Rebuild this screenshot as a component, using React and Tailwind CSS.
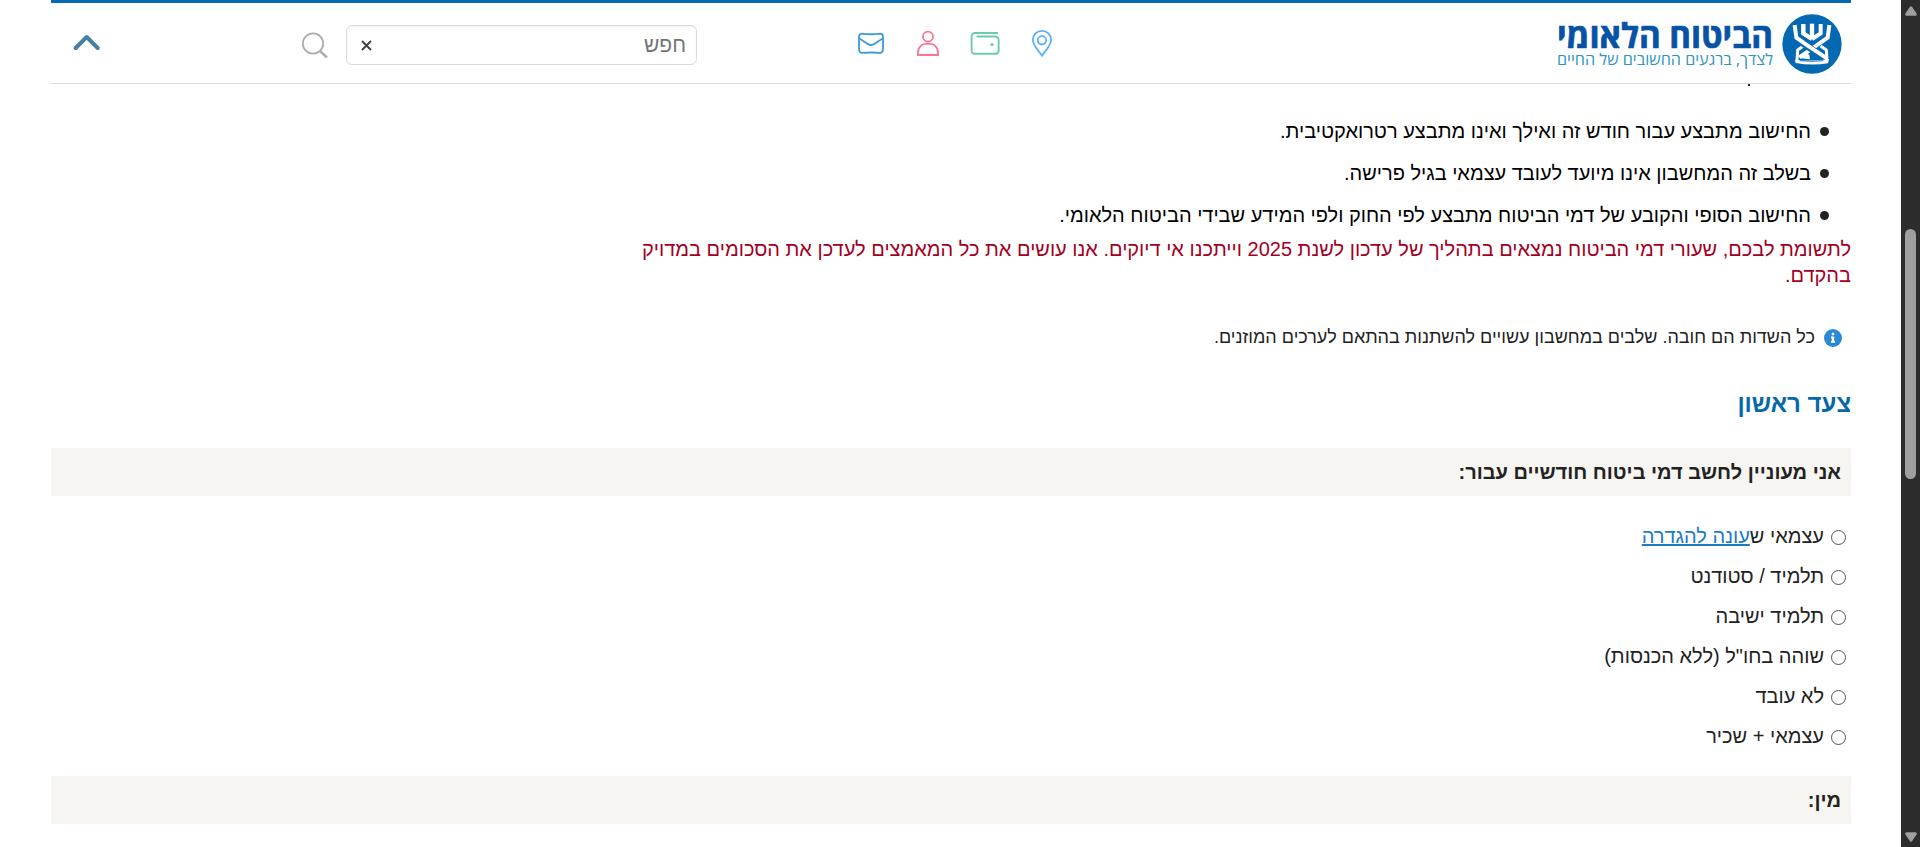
import React from "react";

const notes = [
  "החישוב מתבצע עבור חודש זה ואילך ואינו מתבצע רטרואקטיבית.",
  "בשלב זה המחשבון אינו מיועד לעובד עצמאי בגיל פרישה.",
  "החישוב הסופי והקובע של דמי הביטוח מתבצע לפי החוק ולפי המידע שבידי הביטוח הלאומי.",
];

const options = [
  { text: "עצמאי ש", link: "עונה להגדרה" },
  { text: "תלמיד / סטודנט" },
  { text: "תלמיד ישיבה" },
  { text: 'שוהה בחו"ל (ללא הכנסות)' },
  { text: "לא עובד" },
  { text: "עצמאי + שכיר" },
];

function Emblem() {
  return (
    <svg width="60" height="60" viewBox="0 0 180 180" fill="none" stroke="#fff" strokeWidth="12">
      <circle cx="90" cy="90" r="89" fill="#0568b3" stroke="none" />
      <path d="M64 30V58L90 75" />
      <path d="M116 30V58L90 75" />
      <path d="M90 29V72" strokeWidth="13" />
      <path d="M142 33L137 71L104 94L52 130" />
      <path d="M64 96L47 108L45 138" strokeWidth="9" />
      <path d="M60 86L138 138" stroke="#0568b3" strokeWidth="20" />
      <path d="M64 30V58L84 71" />
      <path d="M38 33L43 71L76 94L136 134" />
      <path d="M116 96L133 108L135 138" strokeWidth="9" />
      <path d="M57 133L61 121L72 114L82 123L84 136Z" fill="#fff" stroke="none" />
      <path d="M39 137Q88 143 141 135L138 148Q90 156 41 147Z" fill="#fff" stroke="none" />
      <path d="M54 140Q90 144 124 140" stroke="#0568b3" strokeWidth="2.500" />
    </svg>
  );
}

function Logo() {
  return (
    <div className="flex items-start pt-[11px] pr-[9px]">
      <Emblem />
      <svg width="222" height="60" viewBox="0 0 222 60" className="mr-[5px] overflow-visible" direction="rtl">
        <text x="218" y="34" textLength="216" lengthAdjust="spacingAndGlyphs" fill="#0653a6" stroke="#0653a6" strokeWidth=".7" className="font-['Open_Sans',sans-serif] text-[34px] font-bold">הביטוח הלאומי</text>
        <text x="218" y="51" textLength="216" lengthAdjust="spacingAndGlyphs" fill="#3195bd" className="font-['Open_Sans',sans-serif] text-[16px]">לצדך, ברגעים החשובים של החיים</text>
      </svg>
    </div>
  );
}

function QuickLinks() {
  return (
    <div className="flex h-[30px] w-[196px]">
      <svg width="24" height="30" viewBox="0 0 24 30" fill="none" stroke="#5cb3f8" strokeWidth="1.8">
        <path d="M12 27.700C9 23.500 2.800 17 2.800 12A9.200 9.200 0 0 1 21.200 12C21.200 17 15 23.500 12 27.700Z" />
        <circle cx="12" cy="12.300" r="4.200" />
      </svg>
      <svg width="30" height="30" viewBox="0 0 30 30" fill="none" stroke="#6bcbaa" strokeWidth="1.9" className="mr-[30px]">
        <path d="M28 5H5A3.300 3.300 0 0 0 1.600 8.300V22.500A3.300 3.300 0 0 0 5 25.800H25.500A3.300 3.300 0 0 0 28.600 22.500V11.500A3 3 0 0 0 25.500 8.500H6.500" />
        <circle cx="22" cy="16.500" r="1.600" fill="#6bcbaa" stroke="none" />
      </svg>
      <svg width="22" height="30" viewBox="0 0 22 30" fill="none" stroke="#fb7490" strokeWidth="1.8" className="mr-[31px]">
        <circle cx="11" cy="8.700" r="5" />
        <path d="M1 27V24.500C1 19 5 15.900 8.500 15.900H13.500C17 15.900 21 19 21 24.500V27Z" />
      </svg>
      <svg width="26" height="30" viewBox="0 0 26 30" fill="none" stroke="#3c9ad9" strokeWidth="1.8" className="mr-[33px]">
        <path d="M4 5.700Q13 6.800 22 5.700Q25 5.700 25 9V21Q25 24.800 22 24.800Q13 24.200 4 24.800Q1 24.800 1 21V9Q1 5.700 4 5.700Z" />
        <path d="M1.200 10.500Q4 12 9 15.500Q13 18.600 17 15.500Q22 12 24.800 10.500" />
      </svg>
    </div>
  );
}

function Header() {
  return (
    <header className="relative flex h-[84px] shrink-0 border-t-[3px] border-b border-t-[#0568b3] border-b-[#dadada] bg-white">
      <Logo />
      <div className="mt-[25px] mr-[501px]">
        <QuickLinks />
      </div>
      <div className="mt-[22px] mr-[161px] flex h-10 w-[351px] items-center justify-between rounded-md border border-[#dadada] pr-[10px] pl-[14px] shadow-[inset_0_1px_2px_rgba(0,0,0,0.06)]">
        <span className="relative top-[-1px] text-[21px] leading-none text-[#757575]">חפש</span>
        <svg width="11" height="11" viewBox="0 0 11 11" stroke="#444" strokeWidth="2">
          <path d="M1 1L10 10M10 1L1 10" />
        </svg>
      </div>
      <svg width="28" height="28" viewBox="0 0 28 28" fill="none" stroke="#adadad" strokeWidth="1.8" className="mt-[28px] mr-[17px]">
        <circle cx="12" cy="12.500" r="10.200" />
        <path d="M19 20L26 26.500" strokeWidth="2.400" />
      </svg>
      <svg width="28" height="18" viewBox="0 0 28 18" fill="none" stroke="#467f9f" strokeWidth="4" strokeLinecap="round" strokeLinejoin="round" className="mt-[30px] mr-auto ml-[22px]">
        <path d="M2.700 15L13.700 4L24.700 15" />
      </svg>
    </header>
  );
}

function Section({ children }) {
  return (
    <div className="flex h-12 shrink-0 items-center bg-[#f6f5f1] pr-[10px] text-[20px] font-bold text-[#222]">{children}</div>
  );
}

function Scrollbar() {
  return (
    <div className="flex h-full w-[19px] shrink-0 flex-col items-center bg-[#2c2c2c]">
      <svg width="12" height="10" viewBox="0 0 12 10" fill="#9f9f9f" className="mt-[6px]">
        <path d="M5 .7Q6 -.3 7 .7L11.600 7.500Q12.200 9.500 10.500 9.700H1.500Q-.2 9.500 .4 7.500Z" />
      </svg>
      <div className="mt-[213px] h-[250px] w-[11px] rounded-full bg-[#9f9f9f]" />
      <svg width="12" height="10" viewBox="0 0 12 10" fill="#9f9f9f" className="mt-auto mb-[5px] rotate-180">
        <path d="M5 .7Q6 -.3 7 .7L11.600 7.500Q12.200 9.500 10.500 9.700H1.500Q-.2 9.500 .4 7.500Z" />
      </svg>
    </div>
  );
}

export default function App() {
  return (
    <div className="flex h-[847px] w-full overflow-hidden bg-white font-['Liberation_Sans',sans-serif] text-[20px] text-[#222]">
      <div dir="rtl" className="flex h-full flex-1 flex-col pr-[50px] pl-[51px]">
        <Header />
        <div className="mr-[101px] h-[2px] w-[2px] shrink-0 bg-[#222]" />
        <ul className="mt-[24px] flex flex-col text-black">
          {notes.map((note) => (
            <li key={note} className="flex h-[42px] items-center pr-[22px]">
              <span className="ml-[9px] size-[9px] rounded-full bg-[#222]" />
              {note}
            </li>
          ))}
        </ul>
        <p className="w-[1240px] pb-[2px] text-[20px] leading-[26px] text-[#a30024]">
          לתשומת לבכם, שעורי דמי הביטוח נמצאים בתהליך של עדכון לשנת 2025 וייתכנו אי דיוקים. אנו עושים את כל המאמצים לעדכן את הסכומים במדויק בהקדם.
        </p>
        <div className="mt-[34px] flex h-[27px] items-center pr-[9px] text-[18px]">
          <svg width="18" height="18" viewBox="0 0 18 18" className="ml-[9px]">
            <circle cx="9" cy="9" r="9" fill="#2b8ad6" />
            <path d="M7.800 3.800H10.200V6.200H7.800ZM7 7.500H10.200V12H11V13.800H7V12H7.800V9.200H7Z" fill="#fff" />
          </svg>
          כל השדות הם חובה. שלבים במחשבון עשויים להשתנות בהתאם לערכים המוזנים.
        </div>
        <h2 className="mt-[38px] mb-[29px] text-[24px] leading-[30px] font-bold text-[#0568a8]">צעד ראשון</h2>
        <Section>אני מעוניין לחשב דמי ביטוח חודשיים עבור:</Section>
        <div className="mt-5 mb-5 flex flex-col">
          {options.map((o) => (
            <label key={o.text} className="flex h-10 items-center pr-[5px]">
              <span className="relative top-[1px] ml-[7px] size-[15px] rounded-full border border-[#555] bg-white" />
              <span>
                {o.text}
                {o.link && <a className="text-[#1b7bc9] underline decoration-2">{o.link}</a>}
              </span>
            </label>
          ))}
        </div>
        <Section>מין:</Section>
      </div>
      <Scrollbar />
    </div>
  );
}
